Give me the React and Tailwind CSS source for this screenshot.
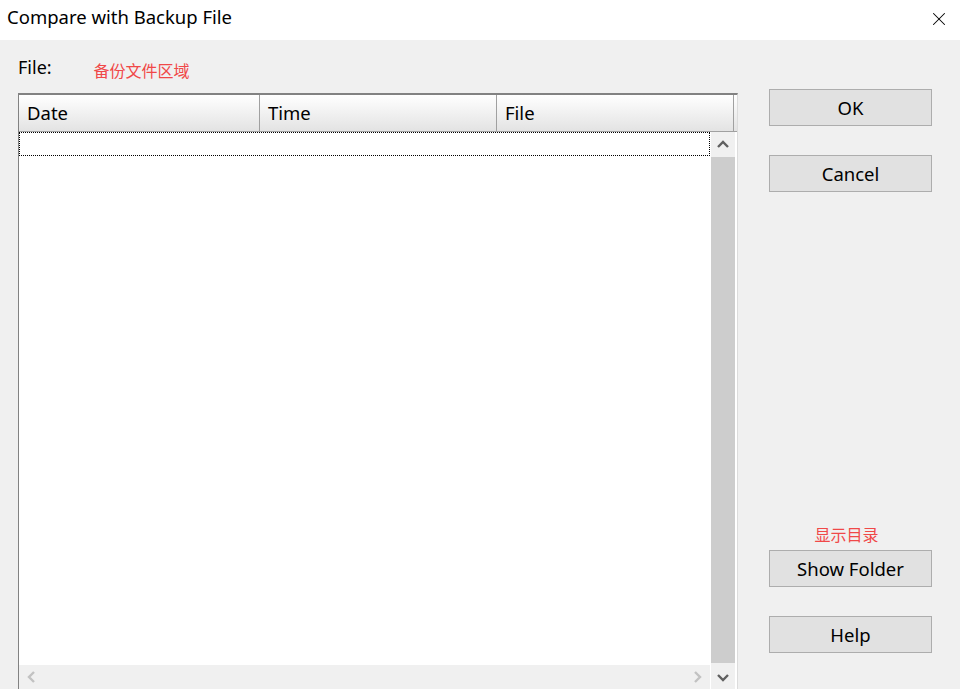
import { X } from 'lucide-react';

const ui = { fontFamily: '"Noto Sans", "Noto Sans CJK SC", sans-serif' };
const cjk = { fontFamily: '"Noto Sans CJK SC", "Noto Sans", sans-serif' };

function Chevron({ dir, className = '' }) {
  // small thick chevrons used by the scroll bar buttons
  const paths = {
    up: 'M1 8 L6 3 L11 8',
    down: 'M1 4 L6 9 L11 4',
    left: 'M8 1 L3 6 L8 11',
    right: 'M4 1 L9 6 L4 11',
  };
  return (
    <svg width="12" height="12" viewBox="0 0 12 12" className={className}>
      <path d={paths[dir]} fill="none" stroke="currentColor" strokeWidth="2.4" />
    </svg>
  );
}

function DialogButton({ children, className = '' }) {
  return (
    <button
      className={`w-[163px] h-[37px] bg-[#e1e1e1] border border-[#adadad] text-[18.5px] text-black flex items-center justify-center ${className}`}
      style={ui}
    >
      {children}
    </button>
  );
}

function HeaderCell({ label, width }) {
  return (
    <div
      className={`${width} h-full border-r border-[#a0a0a0] flex items-center pl-[8px] text-[18.5px] text-black`}
      style={ui}
    >
      {label}
    </div>
  );
}

export default function App() {
  return (
    <div className="w-[960px] h-[689px] overflow-hidden bg-[#f0f0f0] flex flex-col select-none">
      {/* title bar */}
      <div className="h-[40px] bg-white flex items-center justify-between shrink-0 pb-[6px]">
        <span className="pl-[7px] text-[18.5px] text-black" style={ui}>Compare with Backup File</span>
        <X size={22} strokeWidth={1.1} className="mr-[10px] mt-[4px] text-black" />
      </div>

      <div className="flex-1 flex min-h-0">
        {/* left: backup list */}
        <div className="w-[738px] pl-[18px] flex flex-col min-h-0">
          <div className="h-[53px] flex items-start pt-[15px] shrink-0">
            <span className="text-[18px] text-black leading-[24px]" style={ui}>File:</span>
            <span className="ml-[42px] mt-[5px] text-[16px] text-[#f04848] leading-[20px]" style={cjk}>备份文件区域</span>
          </div>

          <div className="flex-1 min-h-0 flex flex-col bg-white border-t-2 border-l border-[#828282] border-r border-r-[#dcdcdc]">
            <div className="h-[37px] shrink-0 flex border-b border-[#a0a0a0] bg-gradient-to-b from-white to-[#e3e3e3]">
              <HeaderCell label="Date" width="w-[241px]" />
              <HeaderCell label="Time" width="w-[237px]" />
              <HeaderCell label="File" width="w-[237px]" />
            </div>

            <div className="flex-1 min-h-0 flex">
              <div className="flex-1 flex flex-col">
                <div className="flex-1">
                  <div className="h-[24px] border border-dotted border-black mr-[1px]" />
                </div>
                <div className="h-[24px] bg-[#f0f0f0] flex items-center justify-between px-[7px] text-[#c2c2c2] mr-[1px]">
                  <Chevron dir="left" />
                  <Chevron dir="right" />
                </div>
              </div>
              <div className="w-[24px] mr-[2px] flex flex-col bg-[#f0f0f0] text-[#606060]">
                <div className="h-[25px] flex items-center justify-center shrink-0">
                  <Chevron dir="up" />
                </div>
                <div className="flex-1 bg-[#cdcdcd]" />
                <div className="h-[24px] mt-[2px] flex items-center justify-center shrink-0">
                  <Chevron dir="down" />
                </div>
              </div>
            </div>
          </div>
        </div>

        {/* right: buttons */}
        <div className="flex-1 flex flex-col pl-[31px] pt-[49px]">
          <DialogButton>OK</DialogButton>
          <DialogButton className="mt-[29px]">Cancel</DialogButton>
          <div className="flex-1" />
          <div className="w-[163px] flex justify-center pb-[6px]">
            <span className="text-[16px] text-[#f04848] leading-[20px] pr-[8px]" style={cjk}>显示目录</span>
          </div>
          <DialogButton>Show Folder</DialogButton>
          <DialogButton className="mt-[29px] mb-[36px]">Help</DialogButton>
        </div>
      </div>
    </div>
  );
}
